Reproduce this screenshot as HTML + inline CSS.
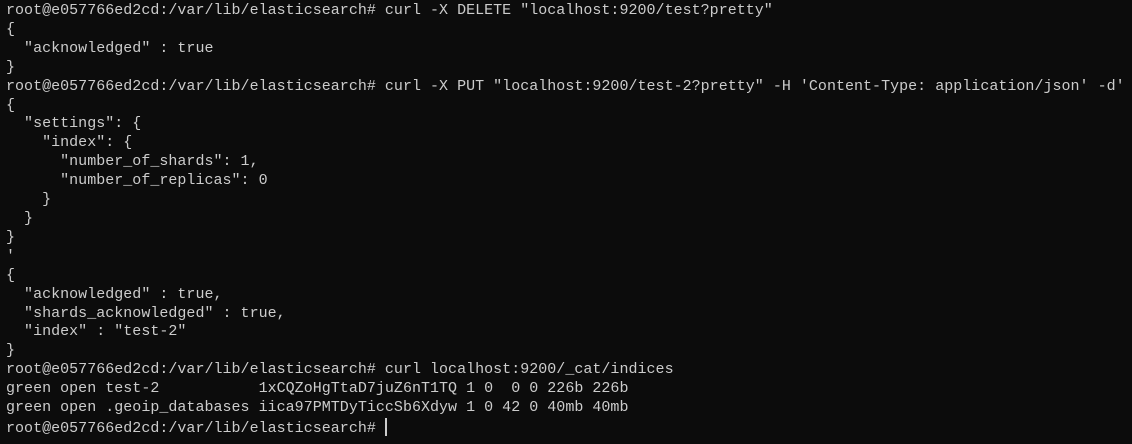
<!DOCTYPE html><html><head><style>
html,body{margin:0;background:#0c0c0c;width:1132px;height:444px;overflow:hidden}
pre{margin:0;padding:2px 0 0 6px;font-family:"Liberation Mono",monospace;font-size:15px;line-height:18.9px;color:#cccccc;letter-spacing:0.02px}
.c{display:inline-block;width:2px;height:18px;background:#ccc;vertical-align:-4px}
</style></head><body><pre>root@e057766ed2cd:/var/lib/elasticsearch# curl -X DELETE "localhost:9200/test?pretty"
{
  "acknowledged" : true
}
root@e057766ed2cd:/var/lib/elasticsearch# curl -X PUT "localhost:9200/test-2?pretty" -H 'Content-Type: application/json' -d'
{
  "settings": {
    "index": {
      "number_of_shards": 1,
      "number_of_replicas": 0
    }
  }
}
'
{
  "acknowledged" : true,
  "shards_acknowledged" : true,
  "index" : "test-2"
}
root@e057766ed2cd:/var/lib/elasticsearch# curl localhost:9200/_cat/indices
green open test-2           1xCQZoHgTtaD7juZ6nT1TQ 1 0  0 0 226b 226b
green open .geoip_databases iica97PMTDyTiccSb6Xdyw 1 0 42 0 40mb 40mb
root@e057766ed2cd:/var/lib/elasticsearch# <span class="c"></span></pre></body></html>
